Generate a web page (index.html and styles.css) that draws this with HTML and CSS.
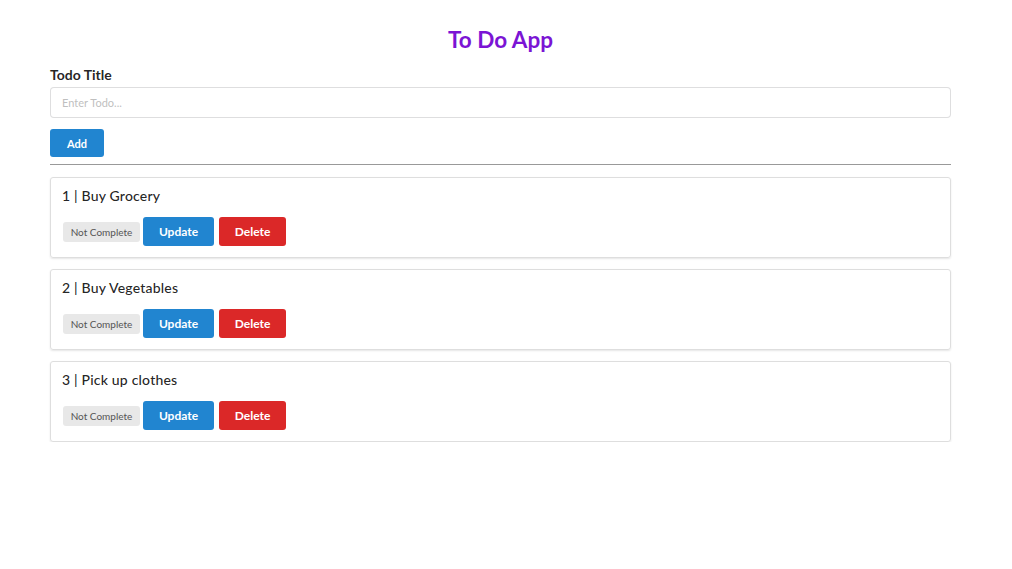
FILE: index.html
```html
<!DOCTYPE html>
<html>
<head>
<meta charset="utf-8">
<link rel="stylesheet" href="styles.css">
</head>
<body>
<div class="container">
  <h2 class="title">To Do App</h2>
  <form class="form">
    <label class="label">Todo Title</label>
    <input class="input" type="text" placeholder="Enter Todo...">
    <button type="button" class="btn btn-blue btn-add">Add</button>
  </form>
  <hr class="divider">
  <div class="list">
    <div class="card">
      <div class="card-title">1 | Buy Grocery</div>
      <div class="actions">
        <span class="status">Not Complete</span>
        <button class="btn btn-blue btn-update">Update</button>
        <button class="btn btn-red btn-delete">Delete</button>
      </div>
    </div>
    <div class="card">
      <div class="card-title">2 | Buy Vegetables</div>
      <div class="actions">
        <span class="status">Not Complete</span>
        <button class="btn btn-blue btn-update">Update</button>
        <button class="btn btn-red btn-delete">Delete</button>
      </div>
    </div>
    <div class="card">
      <div class="card-title">3 | Pick up clothes</div>
      <div class="actions">
        <span class="status">Not Complete</span>
        <button class="btn btn-blue btn-update">Update</button>
        <button class="btn btn-red btn-delete">Delete</button>
      </div>
    </div>
  </div>
</div>
</body>
</html>
```
FILE: styles.css
```css
* { box-sizing: border-box; }
body {
  margin: 0;
  font-family: Lato, "Helvetica Neue", Arial, sans-serif;
  color: rgba(0,0,0,.87);
  background: #fff;
}
.container {
  width: 901px;
  margin-left: 50px;
  padding-top: 26px;
}
.title {
  margin: 0;
  text-align: center;
  font-size: 22.5px;
  line-height: 28px;
  font-weight: 700;
  color: #7b14d4;
}
.form {
  display: flex;
  flex-direction: column;
  align-items: flex-start;
  margin-top: 13px;
}
.label {
  font-size: 14px;
  font-weight: 700;
  line-height: 16px;
  color: rgba(0,0,0,.87);
  margin-bottom: 4px;
}
.input {
  width: 100%;
  height: 31px;
  border: 1px solid rgba(34,36,38,.15);
  border-radius: 4px;
  padding: 0 11px;
  font-family: Lato, sans-serif;
  font-size: 11px;
  outline: none;
}
.input::placeholder { color: #bfbfbf; }
.btn {
  border: none;
  border-radius: 3px;
  color: #fff;
  font-family: Lato, sans-serif;
  font-size: 12px;
  font-weight: 700;
  height: 29px;
  padding: 0;
  cursor: pointer;
}
.btn-blue { background: #2185d0; }
.btn-red { background: #db2828; }
.btn-add {
  width: 54px;
  height: 28px;
  margin-top: 11px;
  font-size: 11px;
}
.divider {
  margin: 7px 0 0;
  border: none;
  border-top: 1px solid #999;
  height: 0;
}
.list {
  display: flex;
  flex-direction: column;
  gap: 11px;
  margin-top: 12px;
}
.card {
  height: 81px;
  border: 1px solid #dedede;
  border-radius: 3px;
  box-shadow: 0 1px 2px rgba(0,0,0,.1);
  padding: 9px 11px;
}
.card-title {
  font-size: 14px;
  line-height: 18px;
  font-weight: 500;
  letter-spacing: 0.2px;
}
.actions {
  display: flex;
  align-items: center;
  margin-top: 12px;
}
.status {
  background: #e8e8e8;
  color: #555;
  font-size: 10px;
  height: 20px;
  line-height: 20px;
  width: 77px;
  text-align: center;
  border-radius: 3px;
  margin-left: 1px;
}
.btn-update {
  width: 71px;
  margin-left: 3px;
}
.btn-delete {
  width: 67px;
  margin-left: 5px;
}
```
